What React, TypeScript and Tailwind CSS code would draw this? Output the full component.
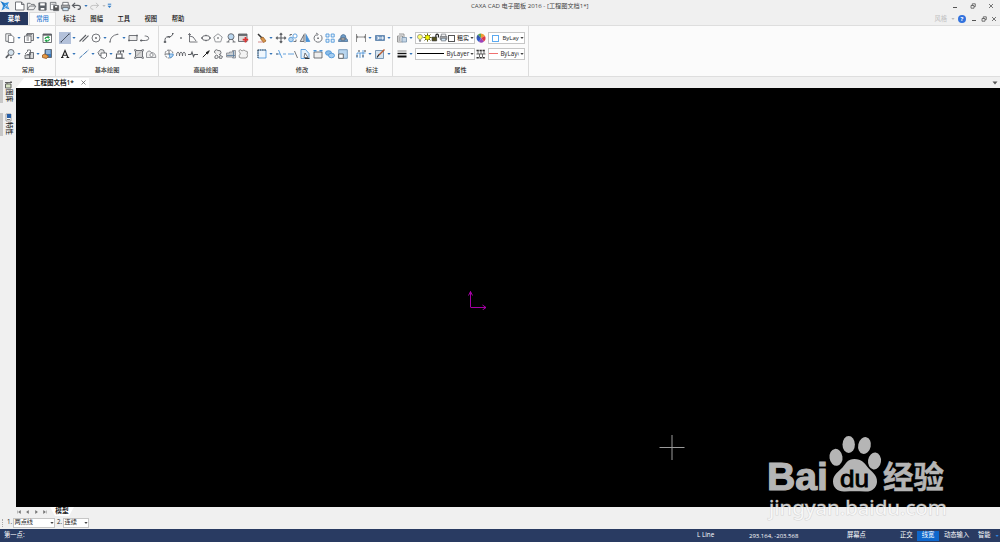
import React from "react";

const dark = "#5c5f64";
const blue = "#4a93d8";
const soft = "#b9d6ef";

const icons: Record<string, React.ReactNode> = {
  new: <path d="M1.500 2h6l2.500 2.500v5.500h-8.500zM7.500 2v2.500h2.500" fill="#fff" />,
  open: <path d="M1.500 9.500v-7h3l1 1.200h3.500v1.800M1.500 9.500l2.300-4h7l-2.500 4z" />,
  save: (
    <>
      <path d="M2 2h8v8h-8z" fill="#5d6268" />
      <path d="M3.500 2.500h5v2.500h-5zM4 7.500h4v2h-4z" fill="#fff" stroke="none" />
    </>
  ),
  saveAll: (
    <>
      <path d="M1.500 1.500h6v8h-6z" fill="#fff" />
      <path d="M5 5h5.500v5.500h-5.500z" fill="#555" />
      <path d="M6.500 5.500h2.500v1.500h-2.500z" fill="#fff" stroke="none" />
      <path d="M2.500 3.500h4" />
    </>
  ),
  print: (
    <>
      <path d="M3 4.500v-3h6v3" fill="#fff" />
      <path d="M1.500 4.500h9v4h-9z" fill="#aaa" />
      <path d="M3 7h6v3.500h-6z" fill="#cfe5f5" />
    </>
  ),
  undo: <path d="M4.500 2L1.500 4.800l3 2.700M1.800 4.800h5.500q3 0 3 2.200t-3 2.200" strokeWidth="1.300" />,
  redo: <path d="M7.500 2l3 2.800-3 2.700M10.200 4.800H4.700q-3 0-3 2.200t3 2.200" stroke="#b5b5b5" />,
  copy: (
    <>
      <path d="M1.800 1.800h5v7.500h-5z" fill="#fff" />
      <path d="M4.300 3.300h3.500l2 2v5.200h-5.500z" fill="#fff" />
    </>
  ),
  paste: (
    <>
      <path d="M4 1.500h6.500v7h-6.500z" fill="#ddd" />
      <path d="M1.500 4h6.500v6.500h-6.500z" fill="#fff" />
      <path d="M3 2.700h6M3.500 6h2.500M3.500 8h2.500" />
    </>
  ),
  refresh: (
    <>
      <path d="M2 2h8.500v8.500h-8.500z" fill="#fff" />
      <path d="M2 2.800h8.500" strokeWidth="1.700" />
      <path d="M4 7q.5-2.200 3.500-1.800M8.500 7q-.5 2.500-3.500 1.800M6.500 4.200l1.500 1-1.200 1M6 9.800l-1.500-1 1.200-1" stroke="#25a34a" strokeWidth="1.200" />
    </>
  ),
  zoom: (
    <>
      <circle cx="7" cy="4.500" r="3" fill="#d5e3ee" />
      <path d="M4.800 6.700L1.800 9.800" strokeWidth="1.700" />
      <path d="M7 8.500v2M6 9.500h2" />
    </>
  ),
  pan: (
    <>
      <path d="M2 7h5v3.500h-5zM6.500 4.500h4v6h-4z" fill="#d8d8d8" />
      <path d="M2 6l2.500-2.500V2h3v4M4 6.500h4" />
    </>
  ),
  book: (
    <>
      <path d="M4 1.500h6.500v8h-6.500z" fill="#3a79ba" />
      <path d="M5 3h4.500M5 5h4.500" stroke="#fff" />
      <path d="M1.500 7l2.500-1 3.500 2-2 2.500-4-1z" fill="#e69a45" stroke="#985b24" />
    </>
  ),
  line: <path d="M2 10L10 2M1.500 10h1.400M9.500 2h1.300" stroke="#3a4250" />,
  parallel: <path d="M1.500 9.500L8 3M4.500 9.700L10.500 3.700" strokeWidth="1.100" />,
  circle: <><circle cx="6" cy="6" r="4" /><path d="M5 6h2M6 5v2" /></>,
  arc: <path d="M2 10Q2.500 3.500 9.500 2.300M1.200 10h1.600M8.800 2.300h1.600" />,
  rect: <><path d="M2 3.500h8v5h-8z" fill="#eee" /><path d="M1.200 8.500h1.600M9.200 3.500h1.600" strokeWidth="1.700" /></>,
  polyline: <path d="M1.500 8.500h5q3.200 0 3.200-2.200t-3-2.300h-1M1.500 8h1.600v1H1.500z" />,
  text: <path d="M3 9.500L6 2.500 9 9.500M4.200 7.300h4M2 9.500h2.500M7.500 9.500h2.700M6.200 3L8.700 9" stroke="#222" strokeWidth="1.100" />,
  dashed: <path d="M1.500 10L10.500 2" stroke="#3771ac" strokeDasharray="4 .6 1 .6" strokeWidth="1" />,
  offset: <><path d="M4.500 1.500l3 .5 1 3-1.500 3-3.500-.5-1.500-3z" fill="#e5e5e5" /><path d="M5 5h5.500v3.500l-2 2-3.500-1z" fill="#fff" /></>,
  block: <><path d="M2.500 6h5.500v4h-5.500z" fill="#fff" strokeWidth="1.100" /><path d="M4 3h6M4 3v2M6.500 3v2.500M9.500 2v2.500M1.500 10.200h9" strokeWidth="1.100" /></>,
  hatch: <><path d="M2.500 2.500h7v7h-7z" fill="#d4d4d4" /><path d="M1.500 1.500h1.500v1.500h-1.500zM9 1.500h1.500v1.500h-1.500zM1.500 9h1.500v1.500h-1.500zM9 9h1.500v1.500h-1.500z" fill="#fff" strokeWidth=".6" /><path d="M3.500 8l4.500-4.500" stroke="#999" /></>,
  cloudRegion: <g stroke="#85888d"><path d="M1.500 9.500v-4.500q1-2.500 3.500-2l1 1.500h1q4 .8 3.800 5z" fill="#eee" /><circle cx="6.500" cy="7" r="1.600" fill="#fff" /></g>,
  spline: <path d="M2 10q-.5-5.500 3-5t5-3M1.200 9.500h1.600v1H1.200zM9 1.500h1.600M4.500 4.500h1.800v1.500" strokeWidth="1" />,
  point: <path d="M5.200 6h1.600" strokeWidth="1.500" />,
  formula: <path d="M2.500 1.500v8.500h8M2.500 4q4-.5 6.500 5M1.200 3l1.300-1.500L4 3" />,
  ellipse: <><ellipse cx="6" cy="6" rx="4" ry="2.500" /><path d="M1.200 6h1.500M9.300 6h1.500M5.500 3.500h1M5.500 8.500h1" strokeWidth="1.500" /></>,
  polygon: <><path d="M6 1.800L10.200 5 8.700 9.900H3.300L1.800 5z" stroke="#85888d" /><path d="M5.300 6h1.400" strokeWidth="1.400" /></>,
  detail: <><circle cx="6" cy="4.700" r="3" fill={soft} /><path d="M3 10l1.700-3M9 10L7.300 7M1.500 10h3M7.500 10h3" /></>,
  addTable: <><path d="M1.500 2h8.500v7.500h-8.500z" fill="#ddd" /><path d="M1.500 3h8.500" strokeWidth="1.700" /><path d="M8.500 5v5.500M5.700 7.700h5.500" stroke="#df3131" strokeWidth="1.700" /></>,
  gear: <><circle cx="6" cy="6" r="4" strokeDasharray="2 .7" /><path d="M6 6h4v2L7 10z" fill={soft} stroke={blue} /><path d="M2 6h5M6 2v4" /></>,
  wave: <path d="M1.500 8Q1.500 4 3 4T4.500 8Q4.500 4 6 4t1.500 4Q7.500 4 9 4t1.500 4" />,
  breakLine: <path d="M1 6.500h3l1-2.500 1.500 4.500 1-2h3.500" strokeWidth="1.100" />,
  arrow: <><path d="M2.800 9.200L8 4" stroke="#222" strokeWidth="1" /><path d="M6 4.700L9.300 2.700 7.500 6z" fill="#222" stroke="#222" /></>,
  contour: <path d="M3.500 5.500q-2-1.500-.5-3t3 0q3-.5 3 2t-2 2M3 8q2-2 3 0t-1.500 2.500T3 8M8 7.500l2.500 1-1 2-2.500-.5z" fill="#eee" />,
  shaft: <><path d="M1.500 5h3V4h3V2.500h3v7.500h-3V9h-6z" fill="#c9cdd1" stroke="#8a8d92" /><path d="M2 7.500h8M8.500 3v6.500" stroke="#5f7fa0" /></>,
  profile: <path d="M3 4.500q-2-1-.7-2.300T5 3q2-2 3.500 0 2.500 0 2 2-1 1 0 2.500 0 2.500-2 2.500H4q-2.500 0-1.800-2.500Q4 6 3 4.500" fill="#f3f3f3" stroke="#888" />,
  erase: <><path d="M2 2l4.500 4.500" stroke="#333" strokeWidth="1.500" /><path d="M4.500 6.500l2.500-1.500 3 4-2.500 1.500z" fill="#d9954a" stroke="#a1682d" /><path d="M2 10h5" stroke="#c77" /></>,
  move: <path d="M6 1.300v9.400M1.300 6h9.400M4.700 2.600L6 1.300l1.300 1.300M4.700 9.400L6 10.700l1.300-1.300M2.600 4.700L1.300 6l1.300 1.300M9.400 4.700L10.700 6 9.400 7.300" strokeWidth="1.100" />,
  copyObj: <><circle cx="4" cy="7.500" r="2.300" fill={soft} stroke={blue} /><circle cx="8" cy="4" r="2.100" fill="#fff" stroke={blue} /><path d="M6.500 9.500h2.500v-2M3 4V2.500h2" /></>,
  mirror: <><path d="M5 2.500v7H1.200z" fill="#ddd" /><path d="M7 2.500v7h3.800z" fill={blue} stroke={blue} /><path d="M6 1v10" stroke="#999" /></>,
  rotate: <><path d="M8.500 3A4 4 0 1 1 4.500 2.500M4 1l2.200 1.300L4.500 4" /><path d="M5.300 6.300h1.500" strokeWidth="1.500" /></>,
  array: <path d="M2 2h3v3h-3zM7.200 2h3v3h-3zM2 7.200h3v3h-3zM7.200 7.200h3v3h-3z" stroke={blue} fill="#e9f3fc" />,
  scaleUp: <><path d="M1.500 9.500q0-3 2-3 0-4 2.800-4t2.700 4q1.700 0 1.700 3z" fill="#6d9dca" stroke="#56779a" /><path d="M4 8V6h4v2z" fill="#ccc" /></>,
  stretch: <><path d="M2 2h8v8h-8z" fill="#f0f7fd" stroke={blue} /><path d="M1.500 2h9M2 2v8" stroke="#333" strokeDasharray="1.500 .8" /></>,
  trim: <><path d="M1 6h4M8 6h3M3.500 2l3.500 8" stroke={blue} /><path d="M1 6h2" /></>,
  extend: <><path d="M1 6h6" stroke={blue} /><path d="M7.500 3l3 7" /></>,
  chamfer: <><path d="M2 1.500h4.500L10 5.500v5H2z" fill="#e4f0fa" stroke={blue} /><path d="M6 5l3 4.500H5z" fill="#fff" /><path d="M6 10.500h4.500" stroke="#222" /></>,
  split: <><path d="M2 4h8v6h-8z" fill="#eee" /><path d="M1.500 2.800h3M7.500 2.800h3" stroke={blue} strokeWidth="1.600" /></>,
  explode: <><ellipse cx="4.500" cy="5" rx="3" ry="2.300" fill="#8bbde8" stroke={blue} /><ellipse cx="7.500" cy="7.500" rx="3" ry="2.300" fill="#a5cdf0" stroke={blue} /></>,
  scale: <><path d="M1.700 1.700h8.600v8.600h-8.600z" fill={soft} stroke="#6991b5" /><path d="M1.700 6h4.600v4.300h-4.600z" fill="#fff" stroke="#555" /></>,
  dim: <path d="M1.500 2v8M10.500 2v8M1.500 5h9M3 4L1.500 5 3 6M9 4l1.500 1L9 6" stroke="#777" />,
  tolerance: <><path d="M1.500 3.500h9v5h-9z" fill="#6e94be" stroke="#5c82ab" /><path d="M3 5h1.500v2h-1.500M6 5v2M8 5h1v2h-1z" stroke="#fff" /></>,
  coordDim: <><path d="M2 10V5h3v5M8 2v8M5 5h5.500" stroke={blue} /><path d="M1 8h2M4 2v2M7 8h2M10 2v2" strokeWidth="1.200" /></>,
  dimEdit: <><path d="M1.500 2.500h8v8h-8z" fill="#d5e3ef" stroke="#6787a8" /><path d="M5 7l5.500-5.500" stroke="#bb5f35" strokeWidth="1.500" /><path d="M3 9.500l2-3" stroke="#222" strokeWidth="1.200" /></>,
  layers: <><path d="M1.500 4h5v6h-5zM3 2h5v4" fill="#eee" stroke="#888" /><path d="M6 5.500h4.500v4.500H6z" fill="#c5d6e6" stroke="#7d97b0" /><path d="M2.500 6h2M2.500 8h2" /></>,
  weight: <><path d="M1.500 3h9" stroke="#555" strokeWidth=".7" /><path d="M1.500 5.500h9" stroke="#111" strokeWidth="1.400" /><path d="M1.500 8.500h9" stroke="#111" strokeWidth="2" /></>,
  linetype: <><path d="M1.500 2.500h9M1.500 9.800h9" stroke="#333" strokeWidth="1.400" strokeDasharray="2.300 .7" /><path d="M1.500 6h9" stroke="#444" /><path d="M3 3v3M6 3v3M9 3v3M4.500 6v3M7.500 6v3" stroke="#555" /></>,
  wheel: (
    <g stroke="none">
      <path d="M6 6V1.500A4.500 4.500 0 0 1 10 4z" fill="#ee9c32" />
      <path d="M6 6l4-2a4.500 4.500 0 0 1-1 5.400z" fill="#df3b45" />
      <path d="M6 6l3 3.400a4.500 4.500 0 0 1-5 .7z" fill="#9c43b8" />
      <path d="M6 6l-2 4.100A4.500 4.500 0 0 1 1.500 6z" fill="#3258c7" />
      <path d="M6 6H1.500A4.500 4.500 0 0 1 3 2.600z" fill="#3258a7" />
      <path d="M6 6L3 2.600A4.500 4.500 0 0 1 6 1.500z" fill="#5cad4d" />
    </g>
  ),
  bulb: <><path d="M6 1.800q3 0 3 2.800 0 1.300-1.700 3H4.700Q3 6 3 4.600q0-2.800 3-2.800z" fill="#ffff72" stroke="#777" /><path d="M4.700 9h2.600M5.200 10.200h1.600" /></>,
  sun: <><path d="M6 .5v11M.5 6h11M2 2l8 8M10 2l-8 8" stroke="#555500" strokeWidth="1.200" /><circle cx="6" cy="6" r="3" fill="#f5f500" stroke="#777700" /></>,
  lock: <><path d="M1.500 5.500h6v5h-6z" fill="#55521c" stroke="#222" /><path d="M6.500 5.500V3q0-1.500 1.700-1.500t1.700 1.500v3" stroke="#222" strokeWidth="1.500" /></>,
};

const Icon = ({ name, size = 12 }: { name: string; size?: number }) => (
  <svg width={size} height={size} viewBox="0 0 12 12" fill="none" stroke={dark} strokeWidth="0.85" className="shrink-0">
    {icons[name]}
  </svg>
);

const Caret = ({ color = "#3474b8" }: { color?: string }) => (
  <svg width="4" height="4" viewBox="0 0 4 4" className="shrink-0">
    <path d="M.4 1.100h3.200L2 3z" fill={color} />
  </svg>
);

// "v" is a drop-down arrow, every other entry is an icon
const ToolRow = ({ items, active }: { items: string[]; active?: string }) => (
  <div className="flex h-4 items-center">
    {items.map((item, i) =>
      item === "v" ? (
        <span key={i} className="flex w-[6px] shrink-0 justify-center">
          <Caret />
        </span>
      ) : (
        <span key={i} className={`flex w-[12.400px] shrink-0 justify-center ${item === active ? "bg-[#b3c1da]" : ""}`}>
          <Icon name={item} />
        </span>
      )
    )}
  </div>
);

const groups = [
  {
    label: "常用",
    width: "w-[56px] pl-[4px]",
    rows: [
      ["copy", "v", "paste", "v", "refresh"],
      ["zoom", "v", "pan", "v", "book"],
    ],
  },
  {
    label: "基本绘图",
    width: "w-[103px] pl-[3px]",
    active: "line",
    rows: [
      ["line", "v", "parallel", "circle", "v", "arc", "v", "rect", "polyline"],
      ["text", "v", "dashed", "v", "offset", "v", "block", "v", "hatch", "cloudRegion"],
    ],
  },
  {
    label: "高级绘图",
    width: "w-[94px] pl-[3.500px]",
    rows: [
      ["spline", "point", "formula", "ellipse", "polygon", "detail", "addTable"],
      ["gear", "wave", "breakLine", "arrow", "contour", "shaft", "profile"],
    ],
  },
  {
    label: "修改",
    width: "w-[99px] pl-[3px]",
    rows: [
      ["erase", "v", "move", "copyObj", "mirror", "rotate", "array", "scaleUp"],
      ["stretch", "v", "trim", "extend", "chamfer", "split", "explode", "scale"],
    ],
  },
  {
    label: "标注",
    width: "w-[41px] pl-[3px]",
    rows: [
      ["dim", "v", "tolerance", "v"],
      ["coordDim", "v", "dimEdit", "v"],
    ],
  },
];

const Combo = ({ className, children }: { className: string; children: React.ReactNode }) => (
  <div className={`flex shrink-0 items-center border border-[#c6c6c6] bg-white ${className}`}>
    <div className="flex min-w-0 flex-1 items-center">{children}</div>
    <Caret color="#444" />
  </div>
);

const WindowButtons = ({ className }: { className: string }) => (
  <div className={`flex items-center ${className}`}>
    <svg width="6" height="6" viewBox="0 0 6 6" stroke="#555" fill="none">
      <path d="M1 4.500h4" />
    </svg>
    <svg width="6" height="6" viewBox="0 0 6 6" stroke="#555" strokeWidth=".8" fill="none">
      <path d="M1 2.500h3v2.700h-3zM2.300 2.500V.8h3v2.800H4" />
    </svg>
    <svg width="6" height="6" viewBox="0 0 6 6" stroke="#555" strokeWidth=".8" fill="none">
      <path d="M1 1l4 4M5 1L1 5" />
    </svg>
  </div>
);

const TitleBar = () => (
  <div className="relative flex h-3 items-center">
    <svg width="13" height="12" viewBox="0 0 13 12" className="shrink-0">
      <path d="M1 1.500l4 1.500L9 2 7.500 5l2 4.500L5.500 8 1.500 10.500 3 6z" fill="#2f8fe0" />
      <path d="M5 4.500l3 3M4.500 8l2-3" stroke="#fff" strokeWidth=".7" />
      <path d="M1 1.500l5 5" stroke="#1465b0" />
    </svg>
    <div className="flex items-center gap-[0.400px] pl-[0.500px]">
      <Icon name="new" />
      <Icon name="open" size={11} />
      <Icon name="save" size={11} />
      <Icon name="saveAll" size={11} />
      <Icon name="print" size={11} />
      <Icon name="undo" size={11} />
      <span className="flex w-[6px] justify-center"><Caret /></span>
      <Icon name="redo" size={11} />
      <span className="flex w-[6px] justify-center"><Caret color="#bbb" /></span>
    </div>
    <svg width="5" height="6" viewBox="0 0 5 6">
      <path d="M.8 1.200h3.400" stroke="#2f7cc8" />
      <path d="M.5 2.700h4L2.500 5z" fill="#2f7cc8" />
    </svg>
    <span className="absolute left-[471px] text-[6.150px] text-[#444]">CAXA CAD 电子图板 2016 - [工程图文档1*]</span>
    <WindowButtons className="ml-auto gap-[12px] pr-[6px]" />
  </div>
);

const MenuTabs = () => (
  <div className="flex h-[13px] items-center text-[6.300px] text-[#111]">
    <div className="flex h-full w-[28px] items-center justify-center bg-[#26385f] pt-[1px] font-bold text-white">菜单</div>
    <div className="ml-[1px] flex h-full w-[27px] items-center justify-center border border-b-0 border-[#dcdcdc] bg-[#fbfbfb] pt-[1px] font-medium text-[#1672cf]">常用</div>
    {["标注", "图幅", "工具", "视图", "帮助"].map((tab) => (
      <div key={tab} className="w-[27.100px] pt-[1px] text-center font-medium">{tab}</div>
    ))}
    <div className="ml-auto flex items-center pt-[1px] pr-[3px]">
      <span className="text-[#c2c2c2]">风格</span>
      <span className="ml-[4px]"><Caret color="#bbb" /></span>
      <span className="ml-[3px] flex size-[8px] items-center justify-center rounded-full bg-[#3272dd] text-[6px] font-bold text-white">?</span>
      <WindowButtons className="ml-[5px] gap-[4px]" />
    </div>
  </div>
);

const Ribbon = () => (
  <div className="flex h-[52px] border-y border-[#dedede] bg-[#fbfbfb] text-[6.200px] font-medium text-[#333]">
    {groups.map((group, i) => (
      <div key={i} className={`flex shrink-0 flex-col border-r border-[#dcdcdc] pt-[4px] ${group.width}`}>
        {group.rows.map((row, r) => (
          <ToolRow key={r} items={row} active={group.active} />
        ))}
        <div className="mt-[3px] -ml-[3px] flex h-[10px] items-center justify-center">{group.label}</div>
      </div>
    ))}
    <div className="flex w-[136px] shrink-0 flex-col border-r border-[#dcdcdc] pt-[4px] pl-[3px] font-normal text-[#222]">
      <div className="flex h-4 items-center">
        <ToolRow items={["layers", "v"]} />
        <Combo className="ml-[0.600px] h-3 w-[60px]">
          <span className="flex">
            <span className="-mr-[2px] -ml-[1px] flex"><Icon name="bulb" size={10} /></span>
            <Icon name="sun" size={9} />
            <span className="-ml-[1px] flex"><Icon name="lock" size={9} /></span>
            <span className="-ml-[1px] flex"><Icon name="print" size={9} /></span>
          </span>
          <span className="size-[7px] shrink-0 border border-[#555]" />
          <span className="ml-[2px] shrink-0 text-[6px]">粗实</span>
        </Combo>
        <ToolRow items={["wheel"]} />
        <Combo className="ml-[1px] h-3 w-[37px]">
          <span className="mr-[3px] ml-[3px] size-[7px] shrink-0 border border-[#5caaf0]" />
          <span className="text-[6px]">ByLay</span>
        </Combo>
      </div>
      <div className="flex h-4 items-center">
        <ToolRow items={["weight", "v"]} />
        <Combo className="ml-[0.600px] h-3 w-[60px]">
          <span className="mr-[2px] ml-[1.500px] h-[1px] w-[27px] shrink-0 bg-black" />
          <span className="text-[6.200px]">ByLayer</span>
        </Combo>
        <ToolRow items={["linetype"]} />
        <Combo className="ml-[1px] h-3 w-[37px]">
          <span className="mr-[2px] h-[1px] w-[9px] shrink-0 bg-[#f07070]" />
          <span className="text-[6.200px]">ByLay‹</span>
        </Combo>
      </div>
      <div className="mt-[3px] -ml-[3px] flex h-[10px] items-center justify-center font-medium">属性</div>
    </div>
  </div>
);

const Sidebar = () => (
  <div className="flex w-[16px] shrink-0 flex-col gap-[10px] pt-[3px] text-[6.500px] font-medium text-[#222]">
    <div className="flex h-[23px]">
      <span className="mr-[1px] w-[3px] bg-[#c8c8c8]" />
      <div className="flex flex-col items-center">
        <svg width="9" height="9" viewBox="0 0 9 9" fill="#d8e5c4" stroke="#555" strokeWidth=".9" className="shrink-0">
          <path d="M1.500 4h5.500v4h-5.500zM3 4V2.500h5M1 2.500h2M7 1v2" />
        </svg>
        <span className="h-[14px] leading-[8px] [writing-mode:vertical-rl] [text-orientation:sideways]">图库</span>
      </div>
    </div>
    <div className="flex h-[23px]">
      <span className="mr-[1px] w-[3px] bg-[#c8c8c8]" />
      <div className="flex flex-col items-center">
        <svg width="9" height="9" viewBox="0 0 9 9" className="shrink-0">
          <path d="M2 1h5v7h-5z" fill="#fff" stroke="#888" strokeWidth=".8" />
          <path d="M3 1h4v4h-4z" fill="#275fa8" />
          <path d="M3 6.500h3" stroke="#777" />
        </svg>
        <span className="h-[14px] leading-[8px] [writing-mode:vertical-rl] [text-orientation:sideways]">特性</span>
      </div>
    </div>
  </div>
);

const DocumentTabs = () => (
  <div className="flex h-[11px] items-end">
    <div className="flex h-[10px] w-[73px] items-center bg-white pl-[18px] text-[6.500px] font-semibold text-[#222] [clip-path:polygon(0_100%,8px_0,100%_0,100%_100%)]">
      工程图文档1*
      <svg width="5" height="5" viewBox="0 0 5 5" className="mr-[3px] ml-auto" stroke="#555" strokeWidth=".7">
        <path d="M.5.5l4 4M4.500.5l-4 4" />
      </svg>
    </div>
    <svg width="6" height="4" viewBox="0 0 6 4" className="mr-[2px] mb-[3px] ml-auto">
      <path d="M.5.500h5L3 3.500z" fill="#555" />
    </svg>
  </div>
);

const Watermark = () => (
  <svg width="205" height="100" viewBox="755 425 205 100" className="absolute top-[425px] left-[755px]">
    <g fill="#b5b5b5">
      <text x="767" y="489.500" fontSize="39.500" fontWeight="700" textLength="61" lengthAdjust="spacingAndGlyphs" fontFamily="Liberation Sans, sans-serif" stroke="#b5b5b5" strokeWidth="1.200">Bai</text>
      <ellipse cx="836" cy="457.300" rx="6.500" ry="8.500" transform="rotate(-8 836 457.300)" />
      <ellipse cx="848.700" cy="444.500" rx="6.200" ry="8.500" />
      <ellipse cx="864.500" cy="445.500" rx="6.300" ry="8.500" transform="rotate(12 864.500 445.500)" />
      <ellipse cx="874.500" cy="461" rx="6.500" ry="8.500" transform="rotate(8 874.500 461)" />
      <path d="M854.500 459c7 0 10 4 13 8s10 7.500 9.500 15c-.5 6.500-6 10-12 9.500-7-.5-14-.5-20 0-7 .5-12-3.500-12-10 0-7 5.500-9.500 9.500-14s5-8.500 12-8.500z" />
      <text x="883" y="488" fontSize="30.500" fontWeight="700" textLength="61" fontFamily="Noto Sans CJK SC, sans-serif" stroke="#b5b5b5" strokeWidth=".5">经验</text>
    </g>
    <text x="840" y="486.500" fontSize="24" textLength="29" lengthAdjust="spacingAndGlyphs" fill="#000" stroke="#000" strokeWidth=".9" fontFamily="Liberation Sans, sans-serif">du</text>
    <text x="769" y="514.500" fontSize="20" textLength="178" lengthAdjust="spacingAndGlyphs" fill="#fff" fillOpacity=".75" stroke="#bbb" strokeOpacity=".55" strokeWidth="1" paintOrder="stroke" fontFamily="Noto Sans, sans-serif">jingyan.baidu.com</text>
  </svg>
);

const Canvas = () => (
  <div className="relative h-[420px] bg-black">
    <svg width="20" height="20" viewBox="0 0 20 20" fill="none" stroke="#b400b4" className="absolute top-[202px] left-[452px]">
      <path d="M2.500 17V1.500M.5 5.500l2-4 2 4M2.500 17.500H18M14.500 15l3.500 2.500-3.500 2.500" strokeWidth=".9" />
    </svg>
    <svg width="26" height="26" viewBox="0 0 26 26" stroke="#9b9b9b" className="absolute top-[347px] left-[643px]">
      <path d="M13 0v25M.5 12.500h25" />
    </svg>
  </div>
);

const ModelTabs = () => (
  <div className="flex h-[9px] items-center">
    <svg width="34" height="9" viewBox="0 0 34 9" fill="#666" stroke="#666" strokeWidth=".4">
      <path d="M1.500 3.500v3M4.500 3.500L2.500 5l2 1.500zM12.500 3.500l-2 1.500 2 1.500zM19.500 3.500l2 1.500-2 1.500zM27.500 3.500l2 1.500-2 1.500zM30.500 3.500v3" />
    </svg>
    <div className="flex h-[9px] w-[24px] items-center justify-center bg-white text-[6.700px] font-bold text-[#222] [clip-path:polygon(0_0,100%_0,calc(100%-5px)_100%,5px_100%)]">模型</div>
  </div>
);

const OptionsBar = () => (
  <div className="flex h-[13px] items-center text-[6.200px] text-[#222]">
    <span className="mr-[4px] ml-[2px] h-[8px] border-l border-dotted border-[#aaa]" />
    <span className="w-[5.500px]">1.</span>
    <Combo className="h-[10px] w-[42px]"><span className="pl-[1px]">两点线</span></Combo>
    <span className="ml-[2.500px] w-[5.500px]">2.</span>
    <Combo className="h-[10px] w-[26px]"><span className="pl-[1px]">连续</span></Combo>
  </div>
);

const StatusBar = () => (
  <div className="flex h-[13px] items-center bg-[#293b62] text-[6.300px] text-white">
    <span className="w-[697px] pl-[4px]">第一点:</span>
    <span className="w-[52px]">L Line</span>
    <span className="w-[98px] text-[6px]">293.164, -203.568</span>
    <span className="w-[53px]">屏幕点</span>
    <span className="w-[17px]">正交</span>
    <span className="flex h-[10px] w-[22px] items-center justify-center bg-[#0f67cc]">线宽</span>
    <span className="ml-[5px] w-[34px]">动态输入</span>
    <span className="w-[17px]">智能</span>
    <Caret color="#2f83df" />
  </div>
);

export default function App() {
  return (
    <div className="relative flex h-[542px] w-[1000px] flex-col overflow-hidden bg-[#f0f0f0] font-['Open_Sans','Noto_Sans_CJK_SC',sans-serif] leading-none whitespace-nowrap">
      <TitleBar />
      <MenuTabs />
      <Ribbon />
      <div className="flex h-[439px]">
        <Sidebar />
        <div className="flex flex-1 flex-col">
          <DocumentTabs />
          <Canvas />
          <ModelTabs />
        </div>
      </div>
      <OptionsBar />
      <StatusBar />
      <Watermark />
    </div>
  );
}
